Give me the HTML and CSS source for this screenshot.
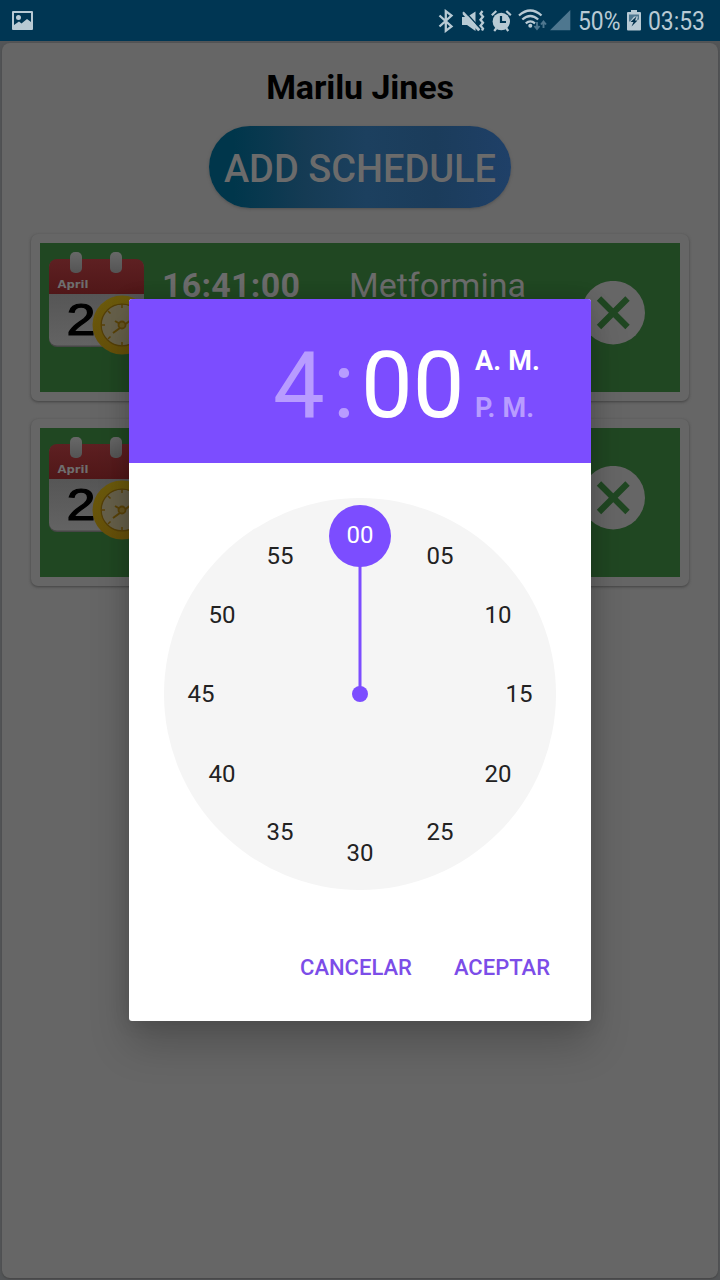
FILE: index.html
```html
<!DOCTYPE html>
<html lang="es">
<head>
<meta charset="utf-8">
<title>Marilu Jines</title>
<link rel="stylesheet" href="styles.css">
</head>
<body>
<svg width="0" height="0" class="defs">
  <defs>
    <linearGradient id="red" x1="0" y1="0" x2="0" y2="1"><stop offset="0" stop-color="#5e2022"/><stop offset="1" stop-color="#501718"/></linearGradient>
    <linearGradient id="paper" x1="0" y1="0" x2="0" y2="1"><stop offset="0" stop-color="#4d4d4d"/><stop offset="1" stop-color="#636363"/></linearGradient>
    <linearGradient id="ring" x1="0" y1="0" x2="0" y2="1"><stop offset="0" stop-color="#686868"/><stop offset="1" stop-color="#545454"/></linearGradient>
    <linearGradient id="gold" x1="0" y1="0" x2="0" y2="1"><stop offset="0" stop-color="#6b5a0c"/><stop offset="1" stop-color="#66500a"/></linearGradient>
    <symbol id="calendar" viewBox="0 0 104 104">
      <rect x="0" y="8" width="95" height="87" rx="8" fill="#474747"/>
      <rect x="0" y="8" width="95" height="85.500" rx="8" fill="url(#paper)"/>
      <path d="M0 42V15a8 8 0 0 1 8-8H87a8 8 0 0 1 8 8V42Z" fill="url(#red)"/>
      <rect x="21" y="0" width="12" height="21" rx="5" fill="url(#ring)"/>
      <rect x="61" y="0" width="12" height="21" rx="5" fill="url(#ring)"/>
      <text class="cal-month" x="8.500" y="36.300" textLength="31" lengthAdjust="spacingAndGlyphs">April</text>
      <text class="cal-day" x="17.500" y="83.300" textLength="29" lengthAdjust="spacingAndGlyphs">2</text>
      <circle cx="73" cy="73" r="29.500" fill="url(#gold)"/>
      <circle cx="73" cy="73" r="20.800" fill="#66604a" stroke="#543f08" stroke-width="1.200"/>
      <path d="M73 52v4M73 90v4M52 73h4M90 73h4M59 59l2.500 2.500M59 87l2.500-2.500M87 59l-2.500 2.500M87 87l-2.500-2.500" stroke="#594208" stroke-width="1.500"/>
      <path d="M64 81L82 68M66 69L73 73" stroke="#594208" stroke-width="2"/>
      <circle cx="73" cy="73" r="3.500" fill="#665522" stroke="#594208" stroke-width="1.800"/>
    </symbol>
    <symbol id="cancel" viewBox="0 0 64 64">
      <circle cx="32.200" cy="31.700" r="31.800" fill="#666"/>
      <path d="M18 17.500L46.500 46M46.500 17.500L18 46" stroke="#204722" stroke-width="6.200"/>
    </symbol>
  </defs>
</svg>

<div class="screen">
  <header class="status">
    <svg class="photo" width="22" height="20" viewBox="0 0 22 20"><path fill="#b8cad4" fill-rule="evenodd" d="M1 0H20a1 1 0 0 1 1 1V18a1 1 0 0 1-1 1H1a1 1 0 0 1-1-1V1A1 1 0 0 1 1 0ZM2 2V14L7 10.500 9.500 12.500 15 8 19 11V2ZM6.500 4a2.500 2.500 0 1 1 0 5a2.500 2.500 0 0 1 0-5Z"/></svg>
    <div class="tray">
      <svg width="134" height="24" viewBox="438 9 134 24" fill="none" stroke="#b8cad4">
        <path d="M439.500 15.500L451.500 26.500 445.800 30.800V11.200L451.500 15.500 439.500 26.500" stroke-width="2.300"/>
        <path d="M462 17h5l8.500-5.500V31l-8.500-6h-5Z" fill="#b8cad4" stroke="none"/>
        <path d="M463.500 13.500L479 30.500" stroke="#b8cad4" stroke-width="2.400"/>
        <path d="M464.500 11L478.500 26.500" stroke="#003653" stroke-width="1.400"/>
        <path d="M463 12.300L479.500 30" stroke-width="2"/>
        <path d="M482.500 11l-2 2.800 2.500 3-2.500 3 2.500 3-2.500 3 2.500 2.800-1 2" stroke-width="2.300"/>
        <circle cx="501.300" cy="21.500" r="8.700" fill="#b8cad4" stroke="none"/>
        <path d="M491.800 15.200l4.500-4.200M510.800 15.200l-4.500-4.200M496.500 28l-2.300 3M506 28l2.300 3" stroke-width="2.200"/>
        <path d="M501 16v6h5" stroke="#003653" stroke-width="2.200"/>
        <path d="M519 15.500Q530.300 5.500 541.500 15.500M522.300 19.500Q530.300 12.500 538.200 19.500M525.800 23.300Q530.300 19.500 535 23.300" stroke-width="2.300"/>
        <circle cx="530.300" cy="25.800" r="2" fill="#b8cad4" stroke="none"/>
        <path d="M537 22v6.500M534.500 26l2.500 3 2.500-3M543.500 28v-6.500M541 24.500l2.500-3 2.500 3" stroke="#4e778f" stroke-width="1.900"/>
        <path d="M550 30.300L570.300 10V30.300Z" fill="#4e778f" stroke="none"/>
      </svg>
      <span class="pct"><span>50%</span></span>
      <svg class="battery" width="14" height="22" viewBox="0 0 14 22"><path d="M4 0h6v2h3a1 1 0 0 1 1 1V19.500a1 1 0 0 1-1 1H1a1 1 0 0 1-1-1V3a1 1 0 0 1 1-1H4Z" fill="#b8cad4"/><path d="M2 4.500h10v5l-2 .5 1-3.500H7L3 11.500H2Z" fill="#4e778f"/><path d="M9.500 6.500L8 10.500h2.500L4.500 16.500 6.500 12H3.500" fill="#00304b"/></svg>
      <span class="time"><span>03:53</span></span>
    </div>
  </header>
  <main class="page">
    <section class="panel">
      <h1>Marilu Jines</h1>
      <button class="add"><span>ADD SCHEDULE</span></button>
      <article class="card">
        <div class="entry">
          <svg class="cal" width="104" height="104"><use href="#calendar"/></svg>
          <b class="hour">16:41:00</b>
          <span class="drug">Metformina</span>
          <svg class="cancel" width="64" height="64"><use href="#cancel"/></svg>
        </div>
      </article>
      <article class="card">
        <div class="entry">
          <svg class="cal" width="104" height="104"><use href="#calendar"/></svg>
          <svg class="cancel" width="64" height="64"><use href="#cancel"/></svg>
        </div>
      </article>
    </section>
  </main>
  <div class="dialog">
    <div class="top">
      <div class="clock"><span class="dim">4</span><span class="dim colon">:</span><span>00</span></div>
      <div class="ampm"><span>A. M.</span><span class="dim">P. M.</span></div>
    </div>
    <svg class="dial" width="392" height="392" viewBox="-196 -196 392 392">
      <circle r="196" fill="#f5f5f5"/>
      <path d="M0 0V-135" stroke="#7c4dff" stroke-width="3"/>
      <circle r="8" fill="#7c4dff"/>
      <circle cy="-158" r="31" fill="#7c4dff"/>
      <g class="nums">
        <text x="0" y="-151" class="sel">00</text>
        <text x="80" y="-130">05</text>
        <text x="138" y="-71">10</text>
        <text x="159" y="8">15</text>
        <text x="138" y="88">20</text>
        <text x="80" y="146">25</text>
        <text x="0" y="167">30</text>
        <text x="-80" y="146">35</text>
        <text x="-138" y="88">40</text>
        <text x="-159" y="8">45</text>
        <text x="-138" y="-71">50</text>
        <text x="-80" y="-130">55</text>
      </g>
    </svg>
    <div class="actions"><span>CANCELAR</span><span>ACEPTAR</span></div>
  </div>
</div>
</body>
</html>
```
FILE: styles.css
```css
* { box-sizing: border-box; }
body { margin: 0; font-family: Roboto, "Liberation Sans", sans-serif; background: #5e5e5e; }
.defs { position: absolute; }
.screen { position: relative; width: 720px; height: 1280px; overflow: hidden; display: flex; flex-direction: column; }

.status { height: 41px; background: #003653; color: #b8cad4; display: flex; justify-content: space-between; align-items: flex-start; padding: 0 0 0 12px; flex: none; }
.photo { margin-top: 11px; }
.tray { width: 270px; margin-right: 12px; display: flex; align-items: flex-start; padding-top: 9px; margin-left: auto; flex: none; }
.tray > svg { flex: none; }
.pct, .time { font-size: 26px; line-height: 24px; height: 24px; white-space: nowrap; }
.pct { width: 42px; margin-left: 6px; }
.time { width: 60px; margin-left: 7px; }
.pct span, .time span { display: inline-block; transform: scaleX(.88); transform-origin: 0 50%; }
.battery { margin: 1px 0 0 7px; }

.page { flex: 1; padding: 2px; background: #535557; }
.panel { height: 1235px; border-radius: 8px; background: #666; box-shadow: 0 1px 2px #444; display: flex; flex-direction: column; align-items: center; padding-top: 24px; }
h1 { margin: 0; font-size: 34px; line-height: 40px; font-weight: 700; letter-spacing: -.1px; color: #000; white-space: nowrap; }
.add { margin: 19px 0 26px; width: 302px; height: 82px; flex: none; border: 0; border-radius: 41px; padding: 4px 0 0; font: 500 38px/44px Roboto, sans-serif; color: #6b6b6b; white-space: nowrap; background: linear-gradient(90deg, #00364b 8%, #153b54 32%, #1c405f 52%, #1b3c5b 75%, #1f4068); box-shadow: 0 1px 3px #505050; }
.card { width: 658px; height: 167px; flex: none; border-radius: 7px; background: #666; box-shadow: 0 1px 3px #424242; padding: 9px; margin-bottom: 18px; }
.entry { height: 149px; background: #204722; display: flex; align-items: flex-start; padding: 9px 35px 0 9px; color: #6b6b6b; font-size: 34px; line-height: 40px; white-space: nowrap; }
.cal { flex: none; }
.hour { margin: 13px 0 0 9px; width: 187px; letter-spacing: .25px; }
.drug { margin-top: 13px; }
.cancel { margin: 29px 0 0 auto; flex: none; }
.cal-month { font: bold 11px "DejaVu Sans", sans-serif; fill: #6e6e6e; }
.cal-day { font: 45px "Liberation Sans", sans-serif; fill: #000; stroke: #000; stroke-width: 1.2; }

.dialog { position: absolute; left: 129px; top: 299px; width: 462px; height: 722px; background: #fff; border-radius: 3px; overflow: hidden; box-shadow: 0 24px 40px rgba(0,0,0,.2), 0 0 20px rgba(0,0,0,.14); display: flex; flex-direction: column; align-items: center; }
.top { width: 100%; height: 164px; flex: none; background: #7c4dff; color: #fff; display: flex; padding-left: 144px; }
.clock { display: flex; font-size: 92px; line-height: 110px; margin-top: 32px; width: 202px; flex: none; }
.dim { color: #b89cff; }
.colon { margin: 0 6px 0 8px; }
.ampm { display: flex; flex-direction: column; font-size: 27px; line-height: 32px; font-weight: 700; gap: 15px; padding-top: 46px; white-space: nowrap; letter-spacing: .15px; }
.dial { margin-top: 35px; flex: none; }
.nums { font-size: 24px; text-anchor: middle; fill: #222; }
.nums .sel { fill: #fff; }
.actions { align-self: stretch; display: flex; justify-content: flex-end; gap: 42px; padding: 65px 41px 0 0; font-size: 22px; line-height: 26px; font-weight: 500; color: #7c4de8; white-space: nowrap; }
```
